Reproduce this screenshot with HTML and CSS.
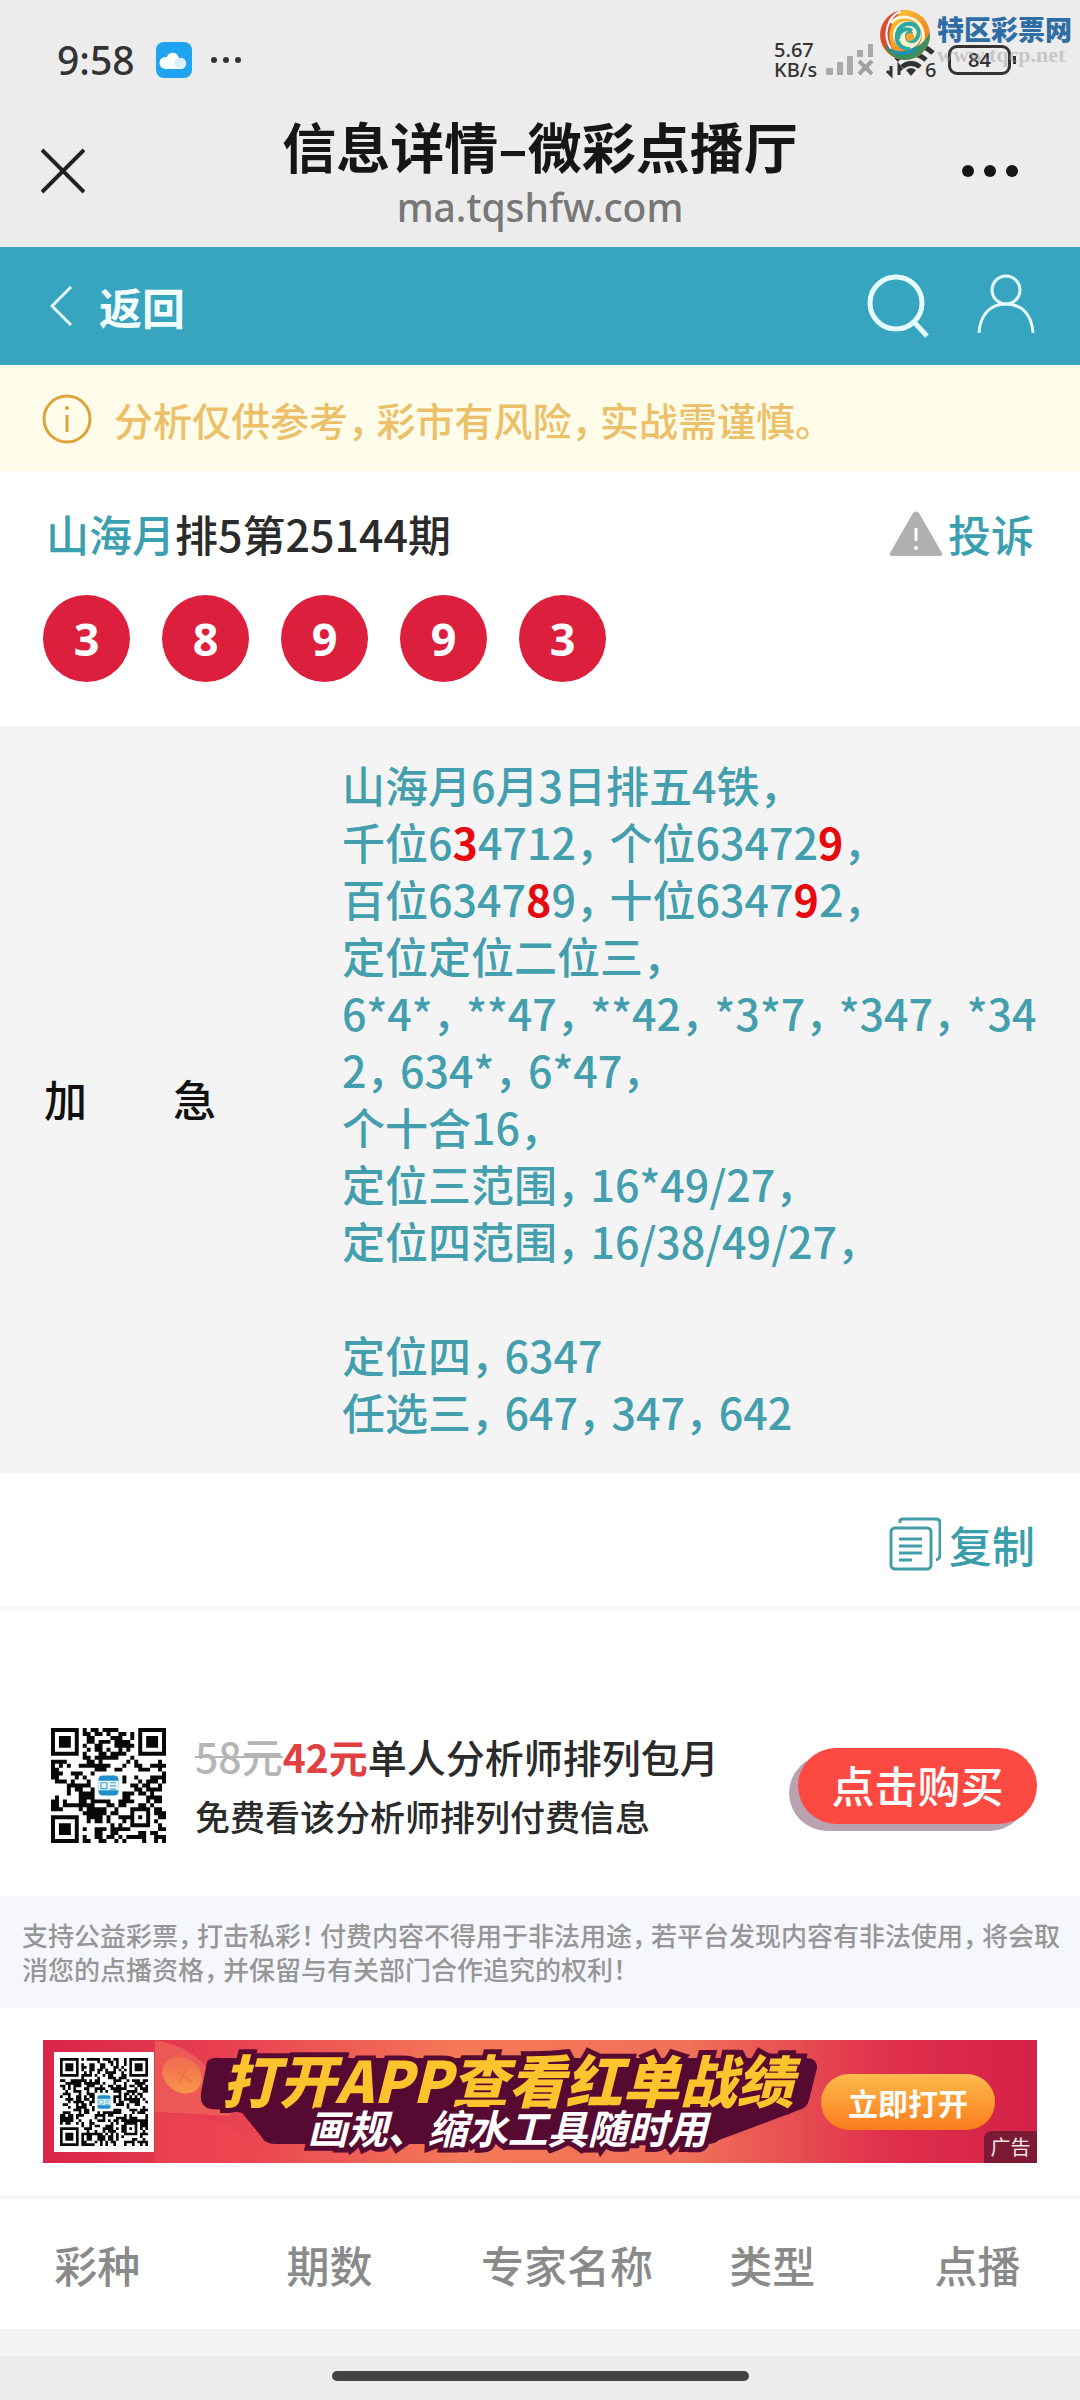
FILE: index.html
```html
<!DOCTYPE html>
<html lang="zh-CN">
<head>
<meta charset="utf-8">
<meta name="viewport" content="width=device-width">
<title>信息详情–微彩点播厅</title>
<link rel="stylesheet" href="styles.css">
</head>
<body>
<header class="shell">
  <div class="status">
    <div class="status-left">
      <span class="clock">9:58</span>
      <svg class="cloud" viewBox="0 0 36 36"><rect width="36" height="36" rx="8" fill="#1ea4f0"/><path d="M10 27a6 6 0 0 1-1-12c1 0 2 0 2 0a6 6 0 0 1 11-1 8 8 0 0 1 1 2 5.500 5.500 0 0 1 3 11z" fill="#fff"/><ellipse cx="24" cy="21" rx="6" ry="5" fill="#cdeafb" opacity=".7"/></svg>
      <svg class="dots-sm" viewBox="0 0 32 8"><g fill="#333"><circle cx="4" cy="4" r="3"/><circle cx="16" cy="4" r="3"/><circle cx="28" cy="4" r="3"/></g></svg>
    </div>
    <div class="status-right">
      <span class="rate">5.67<br>KB/s</span>
      <svg class="signal" viewBox="0 0 48 32"><g fill="#a9a9a9"><rect x="0" y="24" width="7" height="7" rx="1"/><rect x="11" y="18" width="6" height="13" rx="1"/><rect x="21" y="12" width="6" height="19" rx="1"/><rect x="31" y="6" width="6" height="7"/><rect x="42" y="0" width="5" height="13"/></g><path d="M33 17l13 13M46 17L33 30" stroke="#a0a0a0" stroke-width="4"/></svg>
      <svg class="wifi" viewBox="0 0 50 36"><g fill="none" stroke="#333" stroke-width="5"><path d="M2 11a32 32 0 0 1 44 0"/><path d="M9 18a22 22 0 0 1 30 0"/><path d="M15 25a13 13 0 0 1 18 0"/></g><path d="M19 28q5-4 10 0l-5 6z" fill="#333"/><path d="M4 24v9l-4-4M12 33v-9l3 4" fill="none" stroke="#333" stroke-width="3"/><text x="38" y="35" class="wifi-gen">6</text></svg>
      <span class="battery">84</span>
    </div>
    <div class="watermark">
      <svg class="swirl" viewBox="0 0 52 52">
        <defs><linearGradient id="ring" x1="0" y1="0" x2="1" y2="1"><stop offset="0" stop-color="#ffd83a"/><stop offset="1" stop-color="#e8641c"/></linearGradient></defs>
        <circle cx="26" cy="26" r="25" fill="url(#ring)"/>
        <path d="M24 1C4 3-5 26 6 40c5 7 12 10 18 10C8 42 4 18 24 1z" fill="#d94b35"/>
        <path d="M22 2C8 8 3 26 12 40" fill="none" stroke="#fff" stroke-width="2"/>
        <path d="M12 14C20 5 38 6 43 20c4 11-2 20-9 23" fill="none" stroke="#fff6d8" stroke-width="3"/>
        <path d="M51 24c1 15-12 27-26 27C15 50 8 44 6 36c10 10 31 11 45-12z" fill="#3b8f63"/>
        <path d="M8 37c9 9 25 6 31-4 0 8-8 14-17 13-7-1-11-5-14-9z" fill="#1f8fb5"/>
        <circle cx="28" cy="26" r="14" fill="#fdf3c8"/>
        <path d="M31 40C14 40 14 19 27 15c9-2 16 6 11 14-3 5-10 4-10-2 0-3 3-4 5-2M19 30c0-8 8-12 14-8" fill="none" stroke="#2aa9a5" stroke-width="4"/>
        <circle cx="31" cy="28" r="4" fill="#f5a32a"/>
      </svg>
      <span class="mark-text"><b>特区彩票网</b><i>www.tqcp.net</i></span>
    </div>
  </div>
  <div class="titlebar">
    <button class="icon-btn" aria-label="关闭"><svg class="close" viewBox="0 0 44 46"><path d="M1 2l42 42M43 2L1 44" stroke="#222" stroke-width="4" fill="none"/></svg></button>
    <div class="titles"><h1>信息详情–微彩点播厅</h1><p>ma.tqshfw.com</p></div>
    <button class="icon-btn" aria-label="更多"><svg class="more" viewBox="0 0 56 12"><g fill="#161616"><circle cx="6" cy="6" r="6"/><circle cx="28" cy="6" r="6"/><circle cx="50" cy="6" r="6"/></g></svg></button>
  </div>
</header>

<nav class="nav">
  <a class="back" href="#"><svg class="chevron" viewBox="0 0 22 40"><path d="M21 1L2 20l19 19" fill="none" stroke="#e4fbff" stroke-width="3"/></svg>返回</a>
  <div class="nav-tools">
    <a href="#" aria-label="搜索"><svg class="glass" viewBox="0 0 62 64"><circle cx="29" cy="29" r="26" fill="none" stroke="#e4fbff" stroke-width="5"/><path d="M47 48l13 14" stroke="#e4fbff" stroke-width="5"/></svg></a>
    <a href="#" aria-label="我的"><svg class="person" viewBox="0 0 58 60"><g fill="none" stroke="#e4fbff" stroke-width="3"><circle cx="29" cy="16" r="14"/><path d="M2 59C3 41 13 30 29 30s26 11 27 29"/></g></svg></a>
  </div>
</nav>

<div class="tip">
  <svg class="info" viewBox="0 0 50 50"><circle cx="25" cy="25" r="23" fill="none" stroke="#dea43a" stroke-width="3"/><path d="M25 21v17" stroke="#dea43a" stroke-width="3"/><circle cx="25" cy="14" r="2" fill="#dea43a"/></svg>
  <span>分析仅供参考<span class="c">，</span>彩市有风险<span class="c">，</span>实战需谨慎。</span>
</div>

<main>
  <section class="issue">
    <div class="issue-head">
      <h2><a href="#">山海月</a>排5第25144期</h2>
      <a class="complain" href="#"><svg class="warn" viewBox="0 0 54 46"><path d="M24 2q3-3 6 0l23 40q1 3-2 3H3q-3 0-2-3z" fill="#b0b0b0"/><path d="M27 17v13" stroke="#fff" stroke-width="3"/><circle cx="27" cy="37" r="2" fill="#fff"/></svg>投诉</a>
    </div>
    <div class="balls"><span>3</span><span>8</span><span>9</span><span>9</span><span>3</span></div>
  </section>

  <section class="plan">
    <h3>加　　急</h3>
    <p>山海月6月3日排五4铁<span class="c">，</span><br>千位6<b>3</b>4712<span class="c">，</span>个位63472<b>9</b><span class="c">，</span><br>百位6347<b>8</b>9<span class="c">，</span>十位6347<b>9</b>2<span class="c">，</span><br>定位定位二位三<span class="c">，</span><br>6*4*<span class="c">，</span>**47<span class="c">，</span>**42<span class="c">，</span>*3*7<span class="c">，</span>*347<span class="c">，</span>*34<br>2<span class="c">，</span>634*<span class="c">，</span>6*47<span class="c">，</span><br>个十合16<span class="c">，</span><br>定位三范围<span class="c">，</span>16*49/27<span class="c">，</span><br>定位四范围<span class="c">，</span>16/38/49/27<span class="c">，</span><br><br>定位四<span class="c">，</span>6347<br>任选三<span class="c">，</span>647<span class="c">，</span>347<span class="c">，</span>642</p>
  </section>

  <div class="copy-row">
    <button class="copy"><svg class="sheets" viewBox="0 0 52 54"><g fill="none" stroke="#439da9" stroke-width="3"><path d="M11 6V4q0-2 3-2h33q4 0 4 4v32q0 4-4 5"/><rect x="2" y="11" width="40" height="41" rx="4"/><path d="M10 22h23M10 29h23M10 36h23M10 43h13"/></g></svg>复制</button>
  </div>

  <section class="offer">
    <svg class="qr" data-size="29" data-seed="7" viewBox="0 0 29 29" role="img" aria-label="二维码"></svg>
    <div class="offer-text">
      <p class="line-a"><s>58元</s><strong>42元</strong>单人分析师排列包月</p>
      <p class="line-b">免费看该分析师排列付费信息</p>
    </div>
    <button class="buy">点击购买</button>
  </section>

  <p class="legal">支持公益彩票<span class="c">，</span>打击私彩<span class="c">！</span>付费内容不得用于非法用途<span class="c">，</span>若平台发现内容有非法使用<span class="c">，</span>将会取消您的点播资格<span class="c">，</span>并保留与有关部门合作追究的权利<span class="c">！</span></p>

  <div class="ad-wrap">
    <div class="ad">
      <svg class="ad-art" viewBox="0 0 994 123" preserveAspectRatio="none">
        <defs>
          <linearGradient id="bg"><stop offset="0" stop-color="#d82548"/><stop offset=".2" stop-color="#e94351"/><stop offset=".42" stop-color="#f47958"/><stop offset=".65" stop-color="#f07058"/><stop offset=".85" stop-color="#df304c"/><stop offset="1" stop-color="#d32147"/></linearGradient>
          <linearGradient id="coin" x1="0" y1="0" x2="1" y2="1"><stop offset="0" stop-color="#ef6150"/><stop offset="1" stop-color="#f9a04b"/></linearGradient>
        </defs>
        <rect width="994" height="123" fill="url(#bg)"/>
        <path d="M112 0q60 10 76 76l-76-4z" fill="#f57860" opacity=".5"/>
        <path d="M112 72q90 4 118 51H112z" fill="#f04a52" opacity=".5"/>
        <ellipse cx="139" cy="35" rx="21" ry="17" fill="url(#coin)" transform="rotate(35 139 35)"/>
        <path d="M130 28l18 14M144 26l-8 18" stroke="#ed7549" stroke-width="2"/>
        <path d="M164 22q4-5 12-4h588q10 0 10 10l-8 32q-2 8-10 10l-80 30q-4 4-12 4H232q-10 0-14-8l-18-22q-2-3-32-5-12-2-10-16z" fill="#560a32"/>
      </svg>
      <div class="ad-qr"><svg class="qr" data-size="33" data-seed="23" viewBox="0 0 33 33" role="img" aria-label="二维码"></svg></div>
      <div class="ad-copy"><strong>打开APP查看红单战绩</strong><em>画规、缩水工具随时用</em></div>
      <button class="open">立即打开</button>
      <span class="ad-tag">广告</span>
    </div>
  </div>

  <table class="list">
    <thead><tr><th>彩种</th><th>期数</th><th>专家名称</th><th>类型</th><th>点播</th></tr></thead>
  </table>
</main>
<footer class="home"><span></span></footer>
<script src="qr.js"></script>
</body>
</html>
```

FILE: qr.js
```js
// Fills every .qr element with a module grid, corner finders and the centre badge.
document.querySelectorAll('svg.qr').forEach(function (svg) {
  var n = +svg.dataset.size, state = +svg.dataset.seed, d = '';
  function next() { state = (state * 1103515245 + 12345) % 2147483648; return state / 2147483648; }
  function finder(x, y) {
    return 'M' + x + ' ' + y + 'h7v7h-7zm1 1v5h5v-5zm1 1h3v3h-3z';
  }
  var mid = n / 2;
  for (var y = 0; y < n; y++) {
    for (var x = 0; x < n; x++) {
      var on = next() < 0.52;
      var corner = (x < 8 && y < 8) || (x > n - 9 && y < 8) || (x < 8 && y > n - 9);
      var badge = Math.abs(x + 0.5 - mid) < 3.5 && Math.abs(y + 0.5 - mid) < 3.5;
      var align = x > n - 10 && x < n - 3 && y > n - 10 && y < n - 3;
      if (on && !corner && !badge && !align) d += 'M' + x + ' ' + y + 'h1v1h-1z';
    }
  }
  d += finder(0, 0) + finder(n - 7, 0) + finder(0, n - 7);
  var a = n - 9;
  d += 'M' + a + ' ' + a + 'h5v5h-5zm1 1v3h3v-3zm1 1h1v1h-1z';
  var b = mid - 2.5;
  svg.innerHTML = '<path fill="#080808" fill-rule="evenodd" d="' + d + '"/>' +
    '<rect x="' + b + '" y="' + b + '" width="5" height="5" rx="1" fill="#1f8fca"/>' +
    '<rect x="' + b + '" y="' + (mid - 1.2) + '" width="5" height="2.400" fill="#e6f5fc"/>' +
    '<path d="M' + (b + 0.6) + ' ' + (mid - 0.7) + 'h1.500v1.500h-1.500zm2.300 0h1.500m-1.500 .8h1.500m-1.500 .8h1.500" fill="none" stroke="#4ba5d3" stroke-width=".3"/>';
});
```

FILE: styles.css
```css
* { box-sizing: border-box; }
body {
  margin: 0;
  background: #fff;
  color: #2b2b2b;
  font-family: "Noto Sans CJK SC", sans-serif;
  font-size: 43px;
  font-weight: 500;
  line-height: 57px;
}
h1, h2, h3, p { margin: 0; font-size: inherit; font-weight: inherit; }
a { color: #3aa0af; text-decoration: none; }
button { border: 0; padding: 0; background: none; font: inherit; cursor: pointer; }
svg { display: block; flex: none; }
/* fullwidth marks use the font's half-width forms plus a little space */
.c { font-feature-settings: "halt"; margin-right: 0.23em; }

.shell { background: #ececec; height: 247px; }
.status { position: relative; display: flex; justify-content: space-between; padding: 40px 64px 0 57px; height: 100px; }
.status-left, .status-right { display: flex; align-items: center; height: 40px; }
.clock { font: 500 39px/40px "Noto Sans", sans-serif; color: #333; width: 84px; }
.cloud { width: 36px; height: 36px; margin: 0 18px 0 15px; }
.dots-sm { width: 32px; height: 8px; }
.rate { font: 500 20px/20px "Noto Sans", sans-serif; color: #333; width: 52px; }
.signal { width: 48px; height: 32px; }
.wifi { width: 50px; height: 36px; margin: 0 11px 0 13px; overflow: visible; }
.wifi-gen { font: 500 20px "Noto Sans", sans-serif; fill: #333; }
.battery { position: relative; width: 63px; height: 30px; margin-right: 5px; border: 3px solid #333; border-radius: 9px; font: 600 20px/24px "Noto Sans", sans-serif; text-align: center; color: #333; }
.battery::after { content: ""; position: absolute; right: -8px; top: 8px; width: 3px; height: 8px; background: #333; }
.watermark { position: absolute; right: 8px; top: 9px; display: flex; }
.swirl { width: 52px; height: 52px; margin-right: 6px; }
.mark-text { display: flex; flex-direction: column; }
.mark-text b { font-weight: 900; font-size: 27px; line-height: 40px; color: #2f6da5; }
.mark-text i { font: bold 22px/12px "Liberation Serif", serif; color: rgba(160, 160, 160, .5); }

.titlebar { display: flex; align-items: center; justify-content: space-between; height: 142px; padding: 0 41px; }
.icon-btn { display: flex; width: 100px; }
.icon-btn:last-child { justify-content: flex-end; padding-right: 20px; }
.close { width: 44px; height: 46px; }
.more { width: 58px; height: 12px; }
.titles { text-align: center; color: #161616; }
.titles h1 { font-size: 54px; font-weight: 700; line-height: 72px; }
.titles p { font: 500 39px/50px "Noto Sans", sans-serif; color: #777; }

.nav { display: flex; justify-content: space-between; align-items: center; height: 118px; padding: 0 45px 0 50px; background: #37a5c0; }
.back { display: flex; align-items: center; gap: 27px; color: #f2feff; font-weight: 700; }
.chevron { width: 22px; height: 40px; }
.nav-tools { display: flex; gap: 48px; }
.glass { width: 62px; height: 64px; }
.person { width: 58px; height: 60px; }

.tip { display: flex; align-items: center; gap: 22px; height: 106px; padding: 2px 42px 0; background: #fffdea; color: #ecc069; font-size: 39px; }
.info { width: 50px; height: 50px; }

.issue { padding: 34px 46px 44px; }
.issue-head { display: flex; justify-content: space-between; align-items: center; margin-bottom: 33px; }
.complain { display: flex; align-items: center; gap: 5px; }
.warn { width: 54px; height: 46px; }
.balls { display: flex; gap: 32px; margin-left: -3px; }
.balls span { width: 87px; height: 87px; border-radius: 50%; background: #db1f3d; color: #fff; font: 700 45px/87px "Noto Sans", sans-serif; text-align: center; }

.plan { display: flex; align-items: center; padding: 30px 36px 33px 44px; background: #f4f4f4; }
.plan h3 { flex: none; width: 298px; color: #111; }
.plan p { flex: 1; color: #439fad; white-space: nowrap; }
.plan .c { margin-right: 0.28em; }
.plan b { color: #e60a0f; font-weight: 700; }

.copy-row { display: flex; justify-content: flex-end; align-items: center; height: 138px; padding: 8px 45px 0; border-bottom: 4px solid #f7f7f7; }
.copy { display: flex; align-items: center; gap: 8px; color: #3a9dab; }
.sheets { width: 52px; height: 54px; }

.offer { display: flex; align-items: center; height: 285px; padding: 64px 43px 0 51px; }
.offer > .qr { width: 115px; height: 115px; margin-right: 29px; }
.offer-text { flex: 1; white-space: nowrap; }
.line-a { font-size: 39px; line-height: 60px; }
.line-a s { color: #b5b5b5; font-size: 41px; text-decoration-thickness: 2px; }
.line-a strong { color: #e0403f; font-weight: 700; }
.line-b { font-size: 35px; line-height: 60px; }
.buy { width: 239px; height: 76px; border-radius: 38px; background: #fc4a43; color: #fff; line-height: 72px; padding-bottom: 4px; box-shadow: -9px 7px 0 #b9a3b0; }

.legal { padding: 22px 16px 22px 22px; height: 112px; background: #f6f6fd; color: #969696; font-size: 26px; line-height: 34px; }

.ad-wrap { padding: 32px 43px 32px; border-bottom: 4px solid #f8f8f8; }
.ad { position: relative; display: flex; align-items: center; height: 123px; padding: 0 42px 0 11px; overflow: hidden; }
.ad-art { position: absolute; inset: 0; width: 100%; height: 100%; }
.ad-qr { position: relative; width: 100px; height: 100px; padding: 6px; background: #fff; }
.ad-qr .qr { width: 88px; height: 88px; }
.ad-copy { position: relative; flex: 1; display: flex; flex-direction: column; align-items: center; padding: 0 0 6px 40px; white-space: nowrap; color: #fff; -webkit-text-stroke: 10px #560a32; paint-order: stroke fill; }
.ad-copy strong { color: #ffc32e; font-size: 57px; font-weight: 900; font-style: italic; line-height: 56px; }
.ad-copy em { font-size: 40px; font-weight: 700; line-height: 42px; }
.open { position: relative; width: 174px; height: 56px; border-radius: 28px; background: linear-gradient(#fdbb4d, #fb7c1c); color: #fff; font-size: 30px; font-weight: 700; line-height: 56px; }
.ad-tag { position: absolute; right: 0; bottom: 0; width: 53px; height: 32px; border-radius: 8px 0 0; background: #7c1a35; color: #f6e6ea; font-size: 20px; font-weight: 400; line-height: 32px; text-align: center; }

.list { width: 100%; table-layout: fixed; border-collapse: collapse; }
.list th { height: 130px; padding: 0; color: #8a8a8a; font-weight: 500; }
.list th:first-child { width: 18%; }
.list th:nth-child(2) { width: 25%; }

.home { display: flex; justify-content: center; align-items: flex-start; height: 71px; padding-top: 42px; background: linear-gradient(#f4f4f4 27px, #ececec 27px); }
.home span { width: 417px; height: 10px; border-radius: 5px; background: #444; }
```
